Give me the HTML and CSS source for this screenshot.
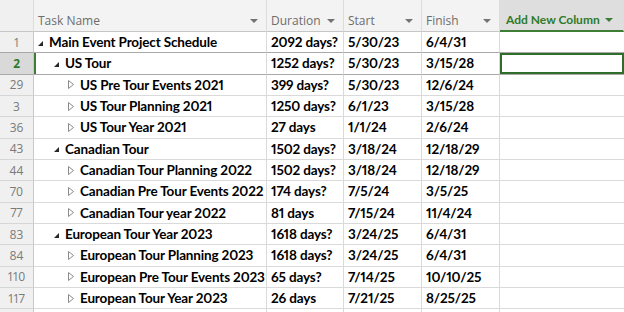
FILE: index.html
```html
<!DOCTYPE html>
<html>
<head>
<meta charset="utf-8">
<link rel="stylesheet" href="styles.css">
</head>
<body>
<div class="sheet">
  <div class="row head">
    <div class="c id"></div>
    <div class="c task"><span>Task Name</span><i class="dd"></i></div>
    <div class="c dur"><span>Duration</span><i class="dd"></i></div>
    <div class="c st"><span>Start</span><i class="dd"></i></div>
    <div class="c fin"><span>Finish</span><i class="dd"></i></div>
    <div class="c add"><span>Add New Column</span><i class="dd g"></i></div>
  </div>

  <div class="row">
    <div class="c id">1</div>
    <div class="c task l0"><svg class="ex" viewBox="0 0 6 6"><polygon points="6,0 6,6 0,6"/></svg>Main Event Project Schedule</div>
    <div class="c dur">2092 days?</div><div class="c st">5/30/23</div><div class="c fin">6/4/31</div><div class="c add"></div>
  </div>
  <div class="row sel">
    <div class="c id">2</div>
    <div class="c task l1"><svg class="ex" viewBox="0 0 6 6"><polygon points="6,0 6,6 0,6"/></svg>US Tour</div>
    <div class="c dur">1252 days?</div><div class="c st">5/30/23</div><div class="c fin">3/15/28</div><div class="c add"></div>
  </div>
  <div class="row">
    <div class="c id">29</div>
    <div class="c task l2"><svg class="co" viewBox="0 0 6 9"><polygon points="0.5,0.5 5.5,4.5 0.5,8.5"/></svg>US Pre Tour Events 2021</div>
    <div class="c dur">399 days?</div><div class="c st">5/30/23</div><div class="c fin">12/6/24</div><div class="c add"></div>
  </div>
  <div class="row">
    <div class="c id">3</div>
    <div class="c task l2"><svg class="co" viewBox="0 0 6 9"><polygon points="0.5,0.5 5.5,4.5 0.5,8.5"/></svg>US Tour Planning 2021</div>
    <div class="c dur">1250 days?</div><div class="c st">6/1/23</div><div class="c fin">3/15/28</div><div class="c add"></div>
  </div>
  <div class="row">
    <div class="c id">36</div>
    <div class="c task l2"><svg class="co" viewBox="0 0 6 9"><polygon points="0.5,0.5 5.5,4.5 0.5,8.5"/></svg>US Tour Year 2021</div>
    <div class="c dur">27 days</div><div class="c st">1/1/24</div><div class="c fin">2/6/24</div><div class="c add"></div>
  </div>
  <div class="row">
    <div class="c id">43</div>
    <div class="c task l1"><svg class="ex" viewBox="0 0 6 6"><polygon points="6,0 6,6 0,6"/></svg>Canadian Tour</div>
    <div class="c dur">1502 days?</div><div class="c st">3/18/24</div><div class="c fin">12/18/29</div><div class="c add"></div>
  </div>
  <div class="row">
    <div class="c id">44</div>
    <div class="c task l2"><svg class="co" viewBox="0 0 6 9"><polygon points="0.5,0.5 5.5,4.5 0.5,8.5"/></svg>Canadian Tour Planning 2022</div>
    <div class="c dur">1502 days?</div><div class="c st">3/18/24</div><div class="c fin">12/18/29</div><div class="c add"></div>
  </div>
  <div class="row">
    <div class="c id">70</div>
    <div class="c task l2"><svg class="co" viewBox="0 0 6 9"><polygon points="0.5,0.5 5.5,4.5 0.5,8.5"/></svg>Canadian Pre Tour Events 2022</div>
    <div class="c dur">174 days?</div><div class="c st">7/5/24</div><div class="c fin">3/5/25</div><div class="c add"></div>
  </div>
  <div class="row">
    <div class="c id">77</div>
    <div class="c task l2"><svg class="co" viewBox="0 0 6 9"><polygon points="0.5,0.5 5.5,4.5 0.5,8.5"/></svg>Canadian Tour year 2022</div>
    <div class="c dur">81 days</div><div class="c st">7/15/24</div><div class="c fin">11/4/24</div><div class="c add"></div>
  </div>
  <div class="row">
    <div class="c id">83</div>
    <div class="c task l1"><svg class="ex" viewBox="0 0 6 6"><polygon points="6,0 6,6 0,6"/></svg>European Tour Year 2023</div>
    <div class="c dur">1618 days?</div><div class="c st">3/24/25</div><div class="c fin">6/4/31</div><div class="c add"></div>
  </div>
  <div class="row">
    <div class="c id">84</div>
    <div class="c task l2"><svg class="co" viewBox="0 0 6 9"><polygon points="0.5,0.5 5.5,4.5 0.5,8.5"/></svg>European Tour Planning 2023</div>
    <div class="c dur">1618 days?</div><div class="c st">3/24/25</div><div class="c fin">6/4/31</div><div class="c add"></div>
  </div>
  <div class="row">
    <div class="c id">110</div>
    <div class="c task l2"><svg class="co" viewBox="0 0 6 9"><polygon points="0.5,0.5 5.5,4.5 0.5,8.5"/></svg>European Pre Tour Events 2023</div>
    <div class="c dur">65 days?</div><div class="c st">7/14/25</div><div class="c fin">10/10/25</div><div class="c add"></div>
  </div>
  <div class="row">
    <div class="c id">117</div>
    <div class="c task l2"><svg class="co" viewBox="0 0 6 9"><polygon points="0.5,0.5 5.5,4.5 0.5,8.5"/></svg>European Tour Year 2023</div>
    <div class="c dur">26 days</div><div class="c st">7/21/25</div><div class="c fin">8/25/25</div><div class="c add"></div>
  </div>
  <div class="row">
    <div class="c id"></div>
    <div class="c task"></div>
    <div class="c dur"></div><div class="c st"></div><div class="c fin"></div><div class="c add"></div>
  </div>
</div>
</body>
</html>
```

FILE: styles.css
```css
html, body {
  margin: 0;
  padding: 0;
  background: #ffffff;
  overflow: hidden;
}
.sheet {
  width: 624px;
  height: 312px;
  overflow: hidden;
  font-family: Lato, "Liberation Sans", sans-serif;
}
.row {
  display: grid;
  grid-template-columns: 34px 233px 77px 78px 78px 1fr;
  height: 21.33px;
  box-sizing: border-box;
}
.c {
  box-sizing: border-box;
  border-right: 1px solid #dadada;
  border-bottom: 1px solid #dadada;
  display: flex;
  align-items: center;
  font-size: 13.5px;
  font-weight: 700;
  font-variant-numeric: proportional-nums;
  letter-spacing: -0.15px;
  color: #000;
  white-space: nowrap;
  overflow: hidden;
  padding-left: 4px;
}
.c.id {
  background: #f0f0f0;
  border-right: 1px solid #c8c8c8;
  border-bottom: 1px solid #d6d6d6;
  justify-content: center;
  padding-left: 0;
  font-family: "Open Sans", "Noto Sans", sans-serif;
  font-weight: 400;
  font-size: 12px;
  letter-spacing: 0;
  color: #7a7a7a;
}
.c.add { border-right: none; }
.head {
  height: 32px;
  background: #f3f3f3;
}
.head .c {
  border-bottom: 1px solid #c6c6c6;
  border-right: 1px solid #dcdcdc;
  font-family: "Open Sans", "Noto Sans", sans-serif;
  font-weight: 400;
  font-size: 12px;
  letter-spacing: 0;
  color: #6d6d6d;
  align-items: flex-end;
  padding-bottom: 2px;
  padding-right: 8px;
  justify-content: space-between;
}
.head .c.id { background: #f0f0f0; }
.head .c.add {
  background: #dedede;
  border-bottom: 2px solid #3d7d36;
  color: #2f7a2a;
  font-family: Lato, "Liberation Sans", sans-serif;
  font-weight: 700;
  font-size: 12px;
  padding-left: 6px;
  padding-right: 22px;
  padding-bottom: 3px;
  justify-content: flex-start;
  gap: 5px;
}
.dd {
  width: 0;
  height: 0;
  border-left: 4px solid transparent;
  border-right: 4px solid transparent;
  border-top: 4px solid #737373;
  margin-bottom: 6px;
}
.dd.g { border-top-color: #3d7d36; margin-bottom: 5px; }
.ex {
  width: 5px;
  height: 5px;
  fill: #262626;
  margin-right: 6px;
  margin-top: 2px;
  flex: none;
}
.co {
  width: 6px;
  height: 9px;
  fill: none;
  stroke: #8a8a8a;
  stroke-width: 1;
  margin-right: 6px;
  flex: none;
}
.l0 { padding-left: 4px; }
.l1 { padding-left: 20px; }
.l2 { padding-left: 34px; }
.sel .c.id {
  background: #d9d9d9;
  color: #2f7a2a;
  font-weight: 700;
}
.sel .c.task { box-shadow: inset 2px 0 0 #3d7d36; }
.sel .c { border-bottom-color: #a9a9a9; }
.row:nth-child(2) .c { border-bottom-color: #a9a9a9; }
.sel .c.add { box-shadow: inset 0 0 0 2px #2f6e2a; }
```
